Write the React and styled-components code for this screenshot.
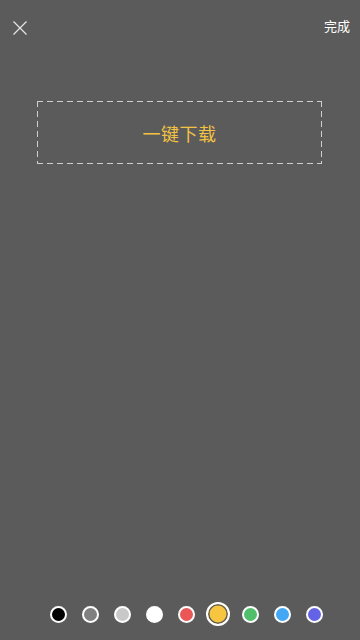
import React, { useState } from 'react';
import styled, { createGlobalStyle } from 'styled-components';

const GlobalStyle = createGlobalStyle`
  html, body {
    margin: 0;
    padding: 0;
    background: #5b5b5b;
  }
  * { box-sizing: border-box; }
`;

const Screen = styled.div`
  width: 360px;
  height: 640px;
  background: #5b5b5b;
  display: flex;
  flex-direction: column;
  font-family: 'Noto Sans CJK SC', 'Noto Sans', sans-serif;
  overflow: hidden;
`;

const TopBar = styled.div`
  height: 54px;
  display: flex;
  align-items: center;
  justify-content: space-between;
  padding: 0 10px 0 12px;
`;

const CloseButton = styled.button`
  width: 16px;
  height: 16px;
  padding: 0;
  margin-top: 1px;
  border: none;
  background: none;
  display: flex;
  cursor: pointer;
`;

const DoneButton = styled.button`
  border: none;
  background: none;
  padding: 0;
  margin-bottom: 3px;
  color: #ffffff;
  font-size: 13px;
  font-family: inherit;
  cursor: pointer;
`;

const Canvas = styled.div`
  flex: 1;
  padding: 47px 38px 0 37px;
`;

const DashedBox = styled.div`
  height: 63px;
  display: flex;
  align-items: center;
  justify-content: center;
  background-image:
    repeating-linear-gradient(90deg, #cfcfcf 0 6px, transparent 6px 10px),
    repeating-linear-gradient(90deg, #cfcfcf 0 6px, transparent 6px 10px),
    repeating-linear-gradient(180deg, #cfcfcf 0 6px, transparent 6px 10px),
    repeating-linear-gradient(180deg, #cfcfcf 0 6px, transparent 6px 10px);
  background-size: 100% 1px, 100% 1px, 1px 100%, 1px 100%;
  background-position: 0 0, 0 100%, 0 0, 100% 0;
  background-repeat: no-repeat;
`;

const BoxText = styled.span`
  color: #f4c242;
  font-size: 18px;
  letter-spacing: 0.5px;
`;

const Palette = styled.div`
  height: 52px;
  display: flex;
  align-items: center;
  justify-content: center;
  padding: 0 0 0 12px;
`;

const Swatch = styled.button`
  width: 32px;
  height: 32px;
  padding: 0;
  border: none;
  background: none;
  display: flex;
  align-items: center;
  justify-content: center;
  cursor: pointer;
`;

const Dot = styled.span`
  display: block;
  width: ${p => (p.$active ? 24 : 17)}px;
  height: ${p => (p.$active ? 24 : 17)}px;
  border-radius: 50%;
  background: ${p => p.$color};
  border: 2px solid #ffffff;
  box-shadow: ${p => (p.$active ? 'inset 0 0 0 1.5px #5b5b5b' : 'none')};
`;

const colors = ['#000000', '#808080', '#c8c8c8', '#ffffff', '#eb5757', '#f8c540', '#4fbf6b', '#42a8f5', '#6463e6'];

export default function App() {
  const [active, setActive] = useState(5);
  return (
    <>
      <GlobalStyle />
      <Screen>
        <TopBar>
          <CloseButton aria-label="关闭">
            <svg width="16" height="16" viewBox="0 0 16 16">
              <path d="M1.5 1.5 L14.5 14.5 M14.5 1.5 L1.5 14.5" stroke="#e6e6e6" strokeWidth="1.2" fill="none" />
            </svg>
          </CloseButton>
          <DoneButton>完成</DoneButton>
        </TopBar>
        <Canvas>
          <DashedBox>
            <BoxText>一键下载</BoxText>
          </DashedBox>
        </Canvas>
        <Palette>
          {colors.map((c, i) => (
            <Swatch key={c} onClick={() => setActive(i)}>
              <Dot $color={c} $active={i === active} />
            </Swatch>
          ))}
        </Palette>
      </Screen>
    </>
  );
}
